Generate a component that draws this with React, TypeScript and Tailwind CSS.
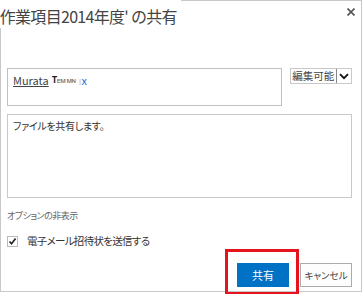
export default function App() {
  return (
    <div className="relative w-[362px] h-[294px] bg-white overflow-hidden font-['Noto_Sans_CJK_JP',sans-serif] text-[#333]">
      <div className="flex flex-col h-[292px]">
        {/* header */}
        <div className="flex h-[28px]">
          <h1 className="-ml-[4px] pt-[5px] pr-[4px] text-[16px] leading-[22px] tracking-[-0.7px] whitespace-nowrap text-[#444] font-normal">
            '作業項目2014年度' の共有
          </h1>
          <div className="flex-1 flex justify-end border-t border-r border-[#c8c8c8] pt-[7px] pr-[6px]">
            <svg width="8" height="8" viewBox="0 0 8 8" className="block">
              <path d="M0.5 0.5 L7.5 7.5 M7.5 0.5 L0.5 7.5" stroke="#555" strokeWidth="1.6" />
            </svg>
          </div>
        </div>

        {/* body */}
        <div className="flex-1 flex flex-col border-l border-r border-b border-[#c8c8c8] pl-[6px] pr-[9px]">
          <div className="flex items-start mt-[40px]">
            <div className="w-[276px] h-[38px] border border-[#c0c0c0] pl-[5px] pt-[3px] flex items-start text-[11px] leading-[16px]">
              <span className="underline text-[#444]">Murata</span>
              <span className="ml-[3px] text-[9px] font-bold text-[#222] tracking-[-0.5px]">T</span>
              <span className="text-[8px] text-[#666] tracking-[-0.5px]">ᴇᴍ ᴍɴ</span>
              <span className="ml-[3px] text-[#c8c8c8]">ı</span>
              <span className="text-[#1a6fc9]">x</span>
            </div>
            <div className="ml-[8px] flex h-[16px] w-[62px] border border-[#c8c8c8]">
              <span className="flex-1 overflow-hidden text-[10.5px] leading-[14px] pl-[1px] text-[#444] whitespace-nowrap">編集可能</span>
              <span className="w-[15px] shrink-0 flex items-center justify-center border-l border-[#888]">
                <svg width="10" height="7" viewBox="0 0 10 7">
                  <path d="M1 1.2 L5 5.2 L9 1.2" fill="none" stroke="#111" strokeWidth="1.8" />
                </svg>
              </span>
            </div>
          </div>

          <div className="mt-[8px] w-full h-[84px] border border-[#c8c8c8] pl-[5px] pt-[4px] text-[10px] leading-[14px] tracking-[-0.3px] [font-feature-settings:'palt'] text-[#333]">
            ファイルを共有します。
          </div>

          <p className="mt-[11px] text-[9px] leading-[14px] tracking-[-0.5px] text-[#666] [font-feature-settings:'palt']">
            オプションの非表示
          </p>

          <label className="mt-[10px] flex items-center gap-[9px] text-[10.5px] leading-[16px] tracking-[-0.7px] text-[#333] [font-feature-settings:'palt']">
            <svg width="11" height="11" viewBox="0 0 11 11" className="block shrink-0">
              <rect x="0.5" y="0.5" width="10" height="10" fill="white" stroke="#777" strokeDasharray="1 1" />
              <path d="M2.5 5.5 L4.5 7.8 L8.6 2.6" fill="none" stroke="#222" strokeWidth="1.6" />
            </svg>
            電子メール招待状を送信する
          </label>

          <div className="mt-auto mb-[4px] flex justify-end gap-[11px]">
            <button className="w-[52px] h-[24px] bg-[#0072c6] text-white text-[11px] leading-[24px]">
              共有
            </button>
            <button className="w-[52px] h-[24px] border border-[#ababab] bg-[#fdfdfd] text-[#444] text-[9.5px] [font-feature-settings:'palt']">
              キャンセル
            </button>
          </div>
        </div>
      </div>

      {/* annotation highlight */}
      <div className="absolute left-[225px] top-[249px] w-[74px] h-[46px] border-[3px] border-[#e5131d]" />
    </div>
  );
}
